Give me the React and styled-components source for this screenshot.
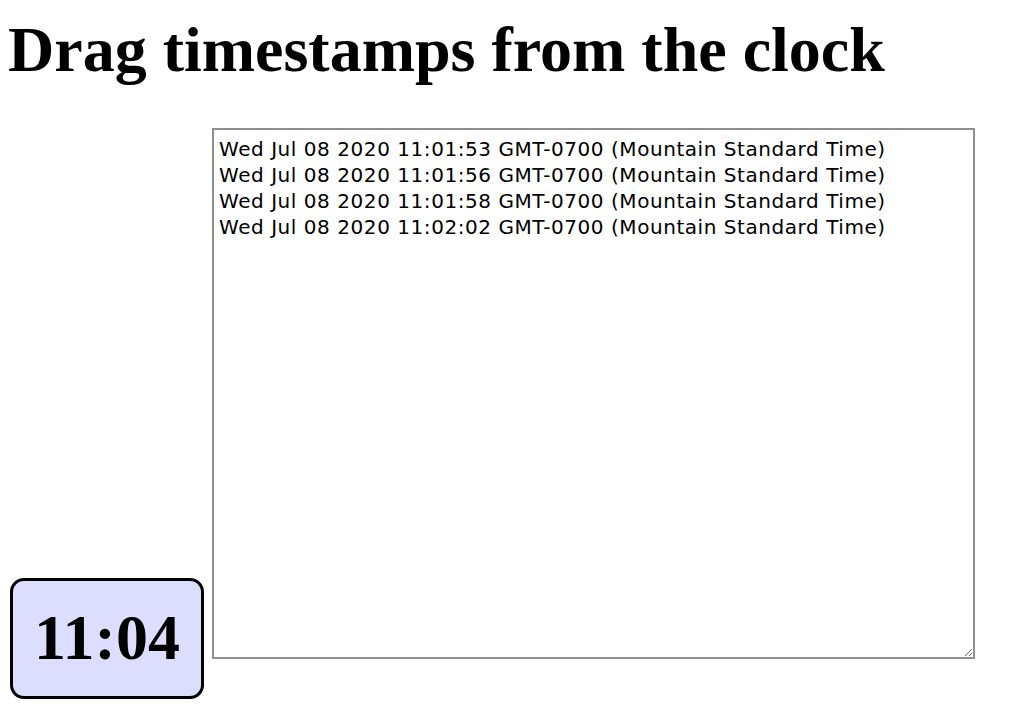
import React from "react";
import styled, { createGlobalStyle } from "styled-components";

const Global = createGlobalStyle`
  html, body { margin: 0; padding: 0; background: #fff; }
  body { font-family: "Liberation Serif", "Times New Roman", serif; color: #000; }
`;

const Page = styled.div`
  padding: 13px 8px 0 8px;
`;

const Title = styled.h1`
  margin: 0;
  font-family: "Liberation Serif", "Times New Roman", serif;
  font-weight: bold;
  font-size: 64px;
  line-height: 74px;
`;

const Row = styled.div`
  display: flex;
  align-items: flex-end;
  gap: 8px;
  margin-top: 41px;
  padding-left: 2px;
`;

const Clock = styled.div`
  box-sizing: border-box;
  width: 194px;
  height: 121px;
  border: 3px solid #000;
  border-radius: 14px;
  background: #ddf;
  display: flex;
  align-items: center;
  justify-content: center;
  font-family: "Liberation Serif", "Times New Roman", serif;
  font-weight: bold;
  font-size: 64px;
  line-height: 1;
  padding-bottom: 2px;
  cursor: grab;
`;

const Log = styled.textarea`
  box-sizing: border-box;
  width: 763px;
  height: 531px;
  margin: 0 0 40px 0;
  border: 2px solid #8f8f8f;
  padding: 6px 5px;
  font-family: "DejaVu Sans", "Liberation Sans", Arial, sans-serif;
  font-size: 20px;
  letter-spacing: 0.55px;
  line-height: 26px;
  color: #000;
  resize: both;
  outline: none;
`;

const stamps = [
  "Wed Jul 08 2020 11:01:53 GMT-0700 (Mountain Standard Time)",
  "Wed Jul 08 2020 11:01:56 GMT-0700 (Mountain Standard Time)",
  "Wed Jul 08 2020 11:01:58 GMT-0700 (Mountain Standard Time)",
  "Wed Jul 08 2020 11:02:02 GMT-0700 (Mountain Standard Time)",
];

export default function App() {
  return (
    <Page>
      <Global />
      <Title>Drag timestamps from the clock</Title>
      <Row>
        <Clock draggable>11:04</Clock>
        <Log defaultValue={stamps.join("\n")} />
      </Row>
    </Page>
  );
}
